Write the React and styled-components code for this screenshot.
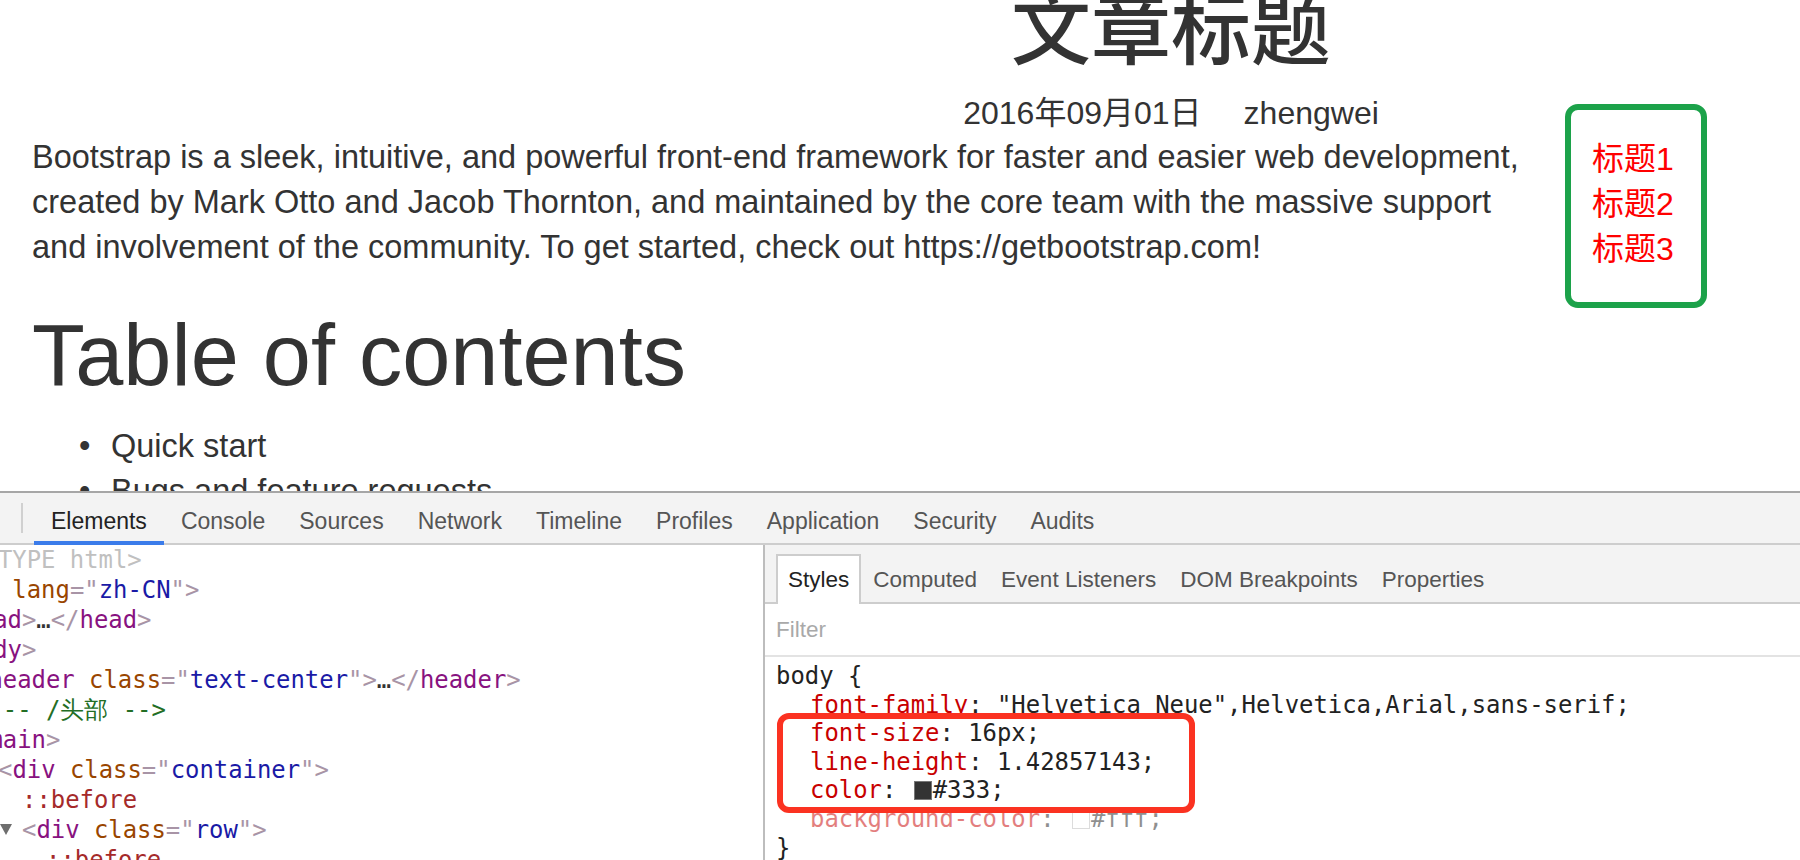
import React from 'react';
import styled, { createGlobalStyle } from 'styled-components';

const GlobalStyle = createGlobalStyle`
  html, body {
    margin: 0;
    padding: 0;
    background: #fff;
  }
  body {
    font-family: 'Liberation Sans', 'Noto Sans CJK SC', sans-serif;
    color: #333;
    overflow: hidden;
  }
`;

const Screen = styled.div`
  width: 1800px;
  height: 860px;
  display: flex;
  flex-direction: column;
  overflow: hidden;
`;

const Viewport = styled.div`
  height: 491px;
  flex-shrink: 0;
  overflow: hidden;
`;

/* the page is scrolled a little, so the header title is cut at the top */
const Page = styled.div`
  display: flex;
  margin-top: -21px;
  padding-left: 32px;
`;

const Main = styled.main`
  flex: 1;
  min-width: 0;
`;

const Header = styled.header`
  text-align: center;
  padding-left: 770px;
`;

const Title = styled.h1`
  margin: 0;
  font-family: 'Noto Sans CJK SC', sans-serif;
  font-size: 80px;
  font-weight: 500;
  line-height: 88px;
  color: #333;
`;

const Meta = styled.div`
  margin-top: 26px;
  font-size: 32px;
  line-height: 40px;
`;

const Author = styled.span`
  margin-left: 42px;
`;

const Lead = styled.p`
  margin: 2px 0 0;
  max-width: 1500px;
  font-size: 32.5px;
  line-height: 45px;
`;

const SectionTitle = styled.h2`
  margin: 39px 0 0;
  font-size: 86.5px;
  font-weight: 500;
  line-height: 92px;
  color: #333;
`;

const Toc = styled.ul`
  margin: 23px 0 0;
  padding-left: 79px;
  list-style: none;
  font-size: 32.5px;
  line-height: 45px;
`;

const TocItem = styled.li`
  &::before {
    content: '•';
    display: inline-block;
    width: 32px;
    margin-left: -32px;
  }
`;

const Aside = styled.aside`
  width: 260px;
  flex-shrink: 0;
  padding-top: 125px;
`;

const NavBox = styled.nav`
  width: 142px;
  box-sizing: border-box;
  margin-left: 25px;
  padding: 27px 0 31px 21px;
  border: 6px solid #1ca24a;
  border-radius: 13px;
`;

const NavLink = styled.div`
  color: #ff0000;
  font-size: 32px;
  line-height: 44.8px;
`;

/* ---------- devtools ---------- */

const DevTools = styled.div`
  flex: 1;
  min-height: 0;
  display: flex;
  flex-direction: column;
  border-top: 2px solid #a6a6a6;
  background: #fff;
  font-family: 'Liberation Sans', sans-serif;
`;

const Toolbar = styled.div`
  height: 50px;
  flex-shrink: 0;
  display: flex;
  align-items: stretch;
  padding-left: 21px;
  background: #f3f3f3;
  border-bottom: 2px solid #cdcdcd;
`;

const Divider = styled.div`
  width: 2px;
  height: 30px;
  align-self: center;
  margin-right: 11px;
  background: #d0d0d0;
`;

const Tab = styled.div`
  display: flex;
  align-items: center;
  padding: 8px 17px 0;
  margin-bottom: -2px;
  font-size: 23px;
  color: ${(p) => (p.$active ? '#222' : '#555')};
  border-bottom: 4px solid ${(p) => (p.$active ? '#3b7cea' : 'transparent')};
`;

const Panes = styled.div`
  flex: 1;
  min-height: 0;
  display: flex;
`;

const ElementsPane = styled.div`
  width: 763px;
  flex-shrink: 0;
  overflow: hidden;
  border-right: 2px solid #bdbdbd;
  font-family: 'DejaVu Sans Mono', monospace;
  font-size: 23.9px;
  line-height: 30px;
  white-space: pre;
`;

/* the tree is scrolled to the right, its left part is hidden */
const Tree = styled.div`
  margin-left: -74px;
`;

const Node = styled.div`
  padding-left: ${(p) => p.$level * 24}px;
  height: 30px;
`;

const Toggle = styled.span`
  display: inline-block;
  width: 22px;
  margin-left: -22px;
  vertical-align: top;
  svg {
    display: block;
    margin-top: 9px;
  }
`;

const Doctype = styled.span`color: #c0c0c0;`;
const Punct = styled.span`color: #a894a6;`;
const TagName = styled.span`color: #881280;`;
const AttrName = styled.span`color: #994500;`;
const AttrValue = styled.span`color: #1a1aa6;`;
const Dots = styled.span`color: #333;`;
const Comment = styled.span`color: #236e25;`;
const Pseudo = styled.span`color: #a52a2a;`;

const StylesPane = styled.div`
  flex: 1;
  min-width: 0;
  display: flex;
  flex-direction: column;
  overflow: hidden;
`;

const SubTabs = styled.div`
  height: 50px;
  flex-shrink: 0;
  display: flex;
  align-items: flex-end;
  padding: 7px 0 0 11px;
  background: #f3f3f3;
  border-bottom: 2px solid #cdcdcd;
`;

const SubTab = styled.div`
  height: 48px;
  display: flex;
  align-items: center;
  padding: 0 10px;
  margin-bottom: -2px;
  font-size: 22.5px;
  white-space: nowrap;
  color: ${(p) => (p.$active ? '#222' : '#555')};
  background: ${(p) => (p.$active ? '#fff' : 'transparent')};
  border: 2px solid ${(p) => (p.$active ? '#cdcdcd' : 'transparent')};
  border-bottom: none;
`;

const FilterRow = styled.div`
  height: 51px;
  flex-shrink: 0;
  display: flex;
  align-items: center;
  padding-left: 11px;
  font-size: 22.5px;
  color: #a9a9a9;
  border-bottom: 2px solid #e3e3e3;
`;

const Rules = styled.div`
  position: relative;
  padding: 5px 0 0 11px;
  font-family: 'DejaVu Sans Mono', monospace;
  font-size: 23.9px;
  line-height: 28.6px;
  color: #222;
  white-space: pre;
`;

const Decl = styled.div`
  padding-left: 34px;
  opacity: ${(p) => (p.$inactive ? 0.5 : 1)};
`;

const PropName = styled.span`color: #c80000;`;

const Swatch = styled.span`
  display: inline-block;
  width: 16px;
  height: 17px;
  margin: 0 1px 0 3px;
  vertical-align: -2px;
  background: ${(p) => p.$color};
  border: 1px solid ${(p) => (p.$color === '#fff' ? '#bbb' : '#777')};
`;

const Highlight = styled.div`
  position: absolute;
  left: 12px;
  top: 56px;
  width: 418px;
  height: 100px;
  box-sizing: border-box;
  border: 6px solid #fb3221;
  border-radius: 12px;
  pointer-events: none;
`;

const mainTabs = [
  'Elements',
  'Console',
  'Sources',
  'Network',
  'Timeline',
  'Profiles',
  'Application',
  'Security',
  'Audits',
];

const sideTabs = ['Styles', 'Computed', 'Event Listeners', 'DOM Breakpoints', 'Properties'];

const Caret = () => (
  <Toggle>
    <svg width="12" height="11" viewBox="0 0 12 11">
      <path d="M0 0 H12 L6 11 Z" fill="#6e6e6e" />
    </svg>
  </Toggle>
);

const Open = ({ name, attr, value, closed }) => (
  <>
    <Punct>&lt;</Punct>
    <TagName>{name}</TagName>
    {attr && (
      <>
        {' '}
        <AttrName>{attr}</AttrName>
        <Punct>="</Punct>
        <AttrValue>{value}</AttrValue>
        <Punct>"</Punct>
      </>
    )}
    <Punct>&gt;</Punct>
    {closed && (
      <>
        <Dots>…</Dots>
        <Punct>&lt;/</Punct>
        <TagName>{name}</TagName>
        <Punct>&gt;</Punct>
      </>
    )}
  </>
);

const App = () => {
  return (
    <>
      <GlobalStyle />
      <Screen>
        <Viewport>
          <Page>
            <Main>
              <Header>
                <Title>文章标题</Title>
                <Meta>
                  <span>2016年09月01日</span>
                  <Author>zhengwei</Author>
                </Meta>
              </Header>
              <Lead>
                Bootstrap is a sleek, intuitive, and powerful front-end framework for faster and
                easier web development, created by Mark Otto and Jacob Thornton, and maintained by
                the core team with the massive support and involvement of the community. To get
                started, check out https://getbootstrap.com!
              </Lead>
              <SectionTitle>Table of contents</SectionTitle>
              <Toc>
                <TocItem>Quick start</TocItem>
                <TocItem>Bugs and feature requests</TocItem>
                <TocItem>Documentation</TocItem>
              </Toc>
            </Main>
            <Aside>
              <NavBox>
                <NavLink>标题1</NavLink>
                <NavLink>标题2</NavLink>
                <NavLink>标题3</NavLink>
              </NavBox>
            </Aside>
          </Page>
        </Viewport>

        <DevTools>
          <Toolbar>
            <Divider />
            {mainTabs.map((t) => (
              <Tab key={t} $active={t === 'Elements'}>
                {t}
              </Tab>
            ))}
          </Toolbar>
          <Panes>
            <ElementsPane>
              <Tree>
                <Node $level={0}>
                  <Doctype>&lt;!DOCTYPE html&gt;</Doctype>
                </Node>
                <Node $level={0}>
                  <Open name="html" attr="lang" value="zh-CN" />
                </Node>
                <Node $level={1}>
                  <Open name="head" closed />
                </Node>
                <Node $level={1}>
                  <Open name="body" />
                </Node>
                <Node $level={2}>
                  <Open name="header" attr="class" value="text-center" closed />
                </Node>
                <Node $level={2}>
                  <Comment>&lt;!-- /头部 --&gt;</Comment>
                </Node>
                <Node $level={2}>
                  <Open name="main" />
                </Node>
                <Node $level={3}>
                  <Open name="div" attr="class" value="container" />
                </Node>
                <Node $level={4}>
                  <Pseudo>::before</Pseudo>
                </Node>
                <Node $level={4}>
                  <Caret />
                  <Open name="div" attr="class" value="row" />
                </Node>
                <Node $level={5}>
                  <Pseudo>::before</Pseudo>
                </Node>
              </Tree>
            </ElementsPane>

            <StylesPane>
              <SubTabs>
                {sideTabs.map((t) => (
                  <SubTab key={t} $active={t === 'Styles'}>
                    {t}
                  </SubTab>
                ))}
              </SubTabs>
              <FilterRow>Filter</FilterRow>
              <Rules>
                <div>body {'{'}</div>
                <Decl>
                  <PropName>font-family</PropName>: "Helvetica Neue",Helvetica,Arial,sans-serif;
                </Decl>
                <Decl>
                  <PropName>font-size</PropName>: 16px;
                </Decl>
                <Decl>
                  <PropName>line-height</PropName>: 1.42857143;
                </Decl>
                <Decl>
                  <PropName>color</PropName>: <Swatch $color="#333" />#333;
                </Decl>
                <Decl $inactive>
                  <PropName>background-color</PropName>: <Swatch $color="#fff" />#fff;
                </Decl>
                <div>{'}'}</div>
                <Highlight />
              </Rules>
            </StylesPane>
          </Panes>
        </DevTools>
      </Screen>
    </>
  );
};

export default App;
